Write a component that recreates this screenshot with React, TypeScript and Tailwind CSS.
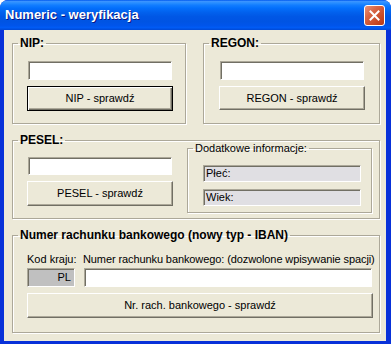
import React from "react";

const sunken =
  "border border-t-[#aca899] border-l-[#aca899] border-r-white border-b-white shadow-[inset_1px_1px_0_#716f64]";
const raised =
  "border border-t-white border-l-white border-r-[#716f64] border-b-[#716f64] shadow-[inset_-1px_-1px_0_#aca899] bg-[#ece9d8]";
const raisedDefault =
  "border border-black shadow-[inset_1px_1px_0_#fff,inset_-1px_-1px_0_#716f64,inset_-2px_-2px_0_#aca899] bg-[#ece9d8]";

const Group = ({
  label,
  bold = true,
  className = "",
  children,
}: {
  label: string;
  bold?: boolean;
  className?: string;
  children: React.ReactNode;
}) => (
  <fieldset
    className={`border border-[#aca899] shadow-[inset_1px_1px_0_#fff,1px_1px_0_#fff] ${className}`}
  >
    <legend
      className={`ml-[5px] whitespace-nowrap px-[2px] leading-[15px] ${
        bold ? "text-[12px] font-bold" : "text-[11px]"
      }`}
    >
      {label}
    </legend>
    {children}
  </fieldset>
);

const TextBox = ({ className = "" }: { className?: string }) => (
  <input type="text" className={`block bg-white outline-none ${sunken} ${className}`} />
);

const Btn = ({
  label,
  isDefault = false,
  className = "",
}: {
  label: string;
  isDefault?: boolean;
  className?: string;
}) => (
  <button
    className={`block whitespace-nowrap text-[11px] text-black ${isDefault ? raisedDefault : raised} ${className}`}
  >
    {label}
  </button>
);

const App = () => {
  return (
    <div className="flex h-[344px] w-[391px] flex-col overflow-hidden rounded-t-[8px] bg-[#0831d9] font-['Liberation_Sans',Arial,sans-serif] text-black">
      {/* title bar */}
      <div className="flex h-[30px] shrink-0 items-center justify-between bg-[linear-gradient(to_bottom,#0058ee_0%,#3a93ff_5%,#288eff_10%,#127dff_17%,#036ffc_27%,#0262ee_40%,#0057e5_55%,#0054e3_72%,#0055eb_85%,#005bf5_92%,#0049d5_100%)] pl-[5px] pr-[6px]">
        <span className="text-[13px] font-bold text-white [text-shadow:1px_1px_0_#0a1883]">
          Numeric - weryfikacja
        </span>
        <div className="flex h-[21px] w-[21px] items-center justify-center rounded-[3px] border border-white bg-[linear-gradient(135deg,#e6937a_0%,#d86545_35%,#c4441f_80%,#b33a18_100%)]">
          <svg width="11" height="11" viewBox="0 0 11 11">
            <path d="M1.5 1.5 L9.5 9.5 M9.5 1.5 L1.5 9.5" stroke="#fff" strokeWidth="2" strokeLinecap="square" />
          </svg>
        </div>
      </div>

      {/* client area */}
      <div className="mb-[3px] ml-[4px] mr-[5px] flex flex-1 flex-col gap-[9px] bg-[#ece9d8] pl-[8px] pt-[6px]">
        <div className="flex gap-[17px]">
          <Group label="NIP:" className="h-[88px] w-[174px]">
            <div className="ml-[14px] mt-[10px] w-[146px]">
              <TextBox className="mx-px h-[19px] w-[144px]" />
              <Btn label="NIP - sprawdź" isDefault className="mt-[6px] h-[25px] w-full" />
            </div>
          </Group>
          <Group label="REGON:" className="h-[88px] w-[177px]">
            <div className="ml-[15px] mt-[10px] w-[146px]">
              <TextBox className="mx-px h-[19px] w-[144px]" />
              <Btn label="REGON - sprawdź" className="mt-[6px] h-[24px] w-full" />
            </div>
          </Group>
        </div>

        <Group label="PESEL:" className="h-[86px] w-[368px]">
          <div className="flex items-start">
            <div className="ml-[14px] mt-[9px] w-[146px]">
              <TextBox className="mx-px h-[18px] w-[144px]" />
              <Btn label="PESEL - sprawdź" className="mt-[6px] h-[25px] w-full" />
            </div>
            <Group
              label="Dodatkowe informacje:"
              bold={false}
              className="ml-[14px] mt-[-7px] h-[72px] w-[185px]"
            >
              <div className="ml-[15px] mt-[9px] flex w-[158px] flex-col gap-[7px]">
                <div className={`h-[17px] bg-[#e0dfe3] pl-[2px] text-[11px] leading-[15px] ${sunken}`}>
                  Płeć:
                </div>
                <div className={`h-[17px] bg-[#e0dfe3] pl-[2px] text-[11px] leading-[15px] ${sunken}`}>
                  Wiek:
                </div>
              </div>
            </Group>
          </div>
        </Group>

        <Group label="Numer rachunku bankowego (nowy typ - IBAN)" className="h-[105px] w-[368px]">
          <div className="ml-[14px] mt-[10px] w-[346px]">
            <div className="flex gap-[9px] whitespace-nowrap text-[11px] leading-[13px]">
              <span className="w-[47px] shrink-0">Kod kraju:</span>
              <span className="tracking-[-0.1px]">Numer rachunku bankowego: (dozwolone wpisywanie spacji)</span>
            </div>
            <div className="mt-[2px] flex gap-[9px]">
              <div className={`h-[19px] w-[48px] bg-[#c0c0c0] pr-[3px] text-right text-[11px] leading-[17px] ${sunken}`}>
                PL
              </div>
              <TextBox className="h-[19px] w-[288px]" />
            </div>
            <Btn label="Nr. rach. bankowego - sprawdź" className="mt-[6px] h-[25px] w-full" />
          </div>
        </Group>
      </div>
    </div>
  );
};

export default App;
